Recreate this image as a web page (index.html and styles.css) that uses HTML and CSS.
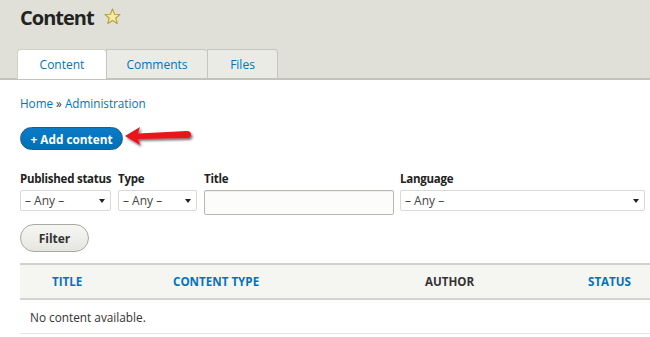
FILE: index.html
```html
<!DOCTYPE html>
<html>
<head>
<meta charset="utf-8">
<link rel="stylesheet" href="styles.css">
</head>
<body>
<header class="header">
  <h1 class="page-title"><span class="title-text">Content</span>
    <svg class="star" width="17" height="17" viewBox="0 0 17 17"><polygon points="8.5,1 10.6,6.2 16,6.5 11.8,10 13.2,15.5 8.5,12.5 3.8,15.5 5.2,10 1,6.5 6.4,6.2" fill="#f6e9a0" stroke="#b8a23a" stroke-width="1.1" stroke-linejoin="round"/></svg>
  </h1>
  <nav class="tabs">
    <a class="tab active">Content</a>
    <a class="tab">Comments</a>
    <a class="tab last">Files</a>
  </nav>
</header>
<main class="page">
  <div class="breadcrumb"><a>Home</a> » <a>Administration</a></div>
  <div class="actions">
    <a class="btn-primary">+ Add content</a>
    <svg class="arrow" width="72" height="26" viewBox="0 0 72 26">
      <defs><filter id="sh" x="-20%" y="-40%" width="150%" height="200%"><feDropShadow dx="1.5" dy="2" stdDeviation="1.2" flood-color="#000" flood-opacity="0.55"/></filter></defs>
      <path d="M2 11 L17 2 L15 8.5 L64 6 Q68 6 68 9.5 Q68 13 64 13 L15 14 L17 20 Z" fill="#e8141a" filter="url(#sh)"/>
    </svg>
  </div>
  <form class="filters">
    <div class="field f1">
      <label>Published status</label>
      <div class="select">– Any –<span class="caret"></span></div>
    </div>
    <div class="field f2">
      <label>Type</label>
      <div class="select">– Any –<span class="caret"></span></div>
    </div>
    <div class="field f3">
      <label>Title</label>
      <div class="text-input"></div>
    </div>
    <div class="field grow">
      <label>Language</label>
      <div class="select">– Any –<span class="caret"></span></div>
    </div>
  </form>
  <a class="btn">Filter</a>
  <div class="table">
    <div class="thead">
      <div class="th link">TITLE</div>
      <div class="th link">CONTENT TYPE</div>
      <div class="th">AUTHOR</div>
      <div class="th link">STATUS</div>
    </div>
    <div class="row">No content available.</div>
  </div>
</main>
</body>
</html>
```
FILE: styles.css
```css
* { box-sizing: border-box; }
html, body { margin: 0; padding: 0; }
body {
  font-family: "Open Sans", "DejaVu Sans", sans-serif;
  font-size: 12px;
  color: #333;
  background: #fff;
  overflow: hidden;
  width: 650px;
}
a { color: #0074bd; text-decoration: none; }

.header {
  background: #e0e0d8;
  border-bottom: 2px solid #c3c3bc;
  padding: 0 0 0 17px;
  height: 80px;
  display: flex;
  flex-direction: column;
}
.page-title {
  margin: 3px 0 0 3px;
  font-size: 20px;
  font-weight: 700;
  color: #232323;
  letter-spacing: -1px;
  display: flex;
  align-items: center;
  gap: 10px;
  height: 30px;
}
.star { margin-top: -2px; }
.tabs {
  display: flex;
  margin-top: 17px;
  height: 29px;
}
.tab {
  display: flex;
  align-items: center;
  justify-content: center;
  height: 29px;
  background: #ebebe5;
  border: 1px solid #c6c6bf;
  border-bottom: none;
  border-right: none;
  border-radius: 4px 4px 0 0;
  font-size: 12px;
  color: #0074bd;
  margin-bottom: -1px;
}
.tab:nth-child(1) { width: 89px; }
.tab:nth-child(2) { width: 101px; border-radius: 0 4px 0 0; }
.tab:nth-child(3) { width: 71px; border-right: 1px solid #c6c6bf; border-radius: 0 4px 0 0; }
.tab.active {
  background: #fff;
  height: 30px;
  border-color: #d0d0ca;
  position: relative;
  z-index: 1;
}

.page { padding: 0 0 0 20px; }
.breadcrumb {
  margin-top: 15px;
  height: 16px;
  line-height: 16px;
  font-size: 11.7px;
  color: #333;
}
.actions {
  position: relative;
  margin-top: 16px;
  height: 24px;
}
.btn-primary {
  display: inline-flex;
  align-items: center;
  justify-content: center;
  width: 103px;
  height: 23px;
  border-radius: 12px;
  background: linear-gradient(#0a7bc6, #0070b6);
  border: 1px solid #1e5c90;
  color: #fff;
  font-weight: 700;
  font-size: 11.8px;
}
.arrow {
  position: absolute;
  left: 103px;
  top: -2px;
}

.filters {
  display: flex;
  margin-top: 19px;
  gap: 7px;
  padding-right: 5px;
}
.field { display: flex; flex-direction: column; }
.field.f1 { width: 91px; }
.field.f2 { width: 79px; }
.field.f3 { width: 190px; margin-right: -1px; }
.field.grow { flex: 1; }
.field label {
  font-weight: 700;
  font-size: 11.5px;
  letter-spacing: -0.25px;
  color: #222;
  height: 17px;
  line-height: 17px;
  margin-bottom: 3px;
  white-space: nowrap;
}
.select {
  position: relative;
  height: 21px;
  border: 1px solid #d9d9d6;
  border-radius: 2px;
  background: #fff;
  padding-left: 4px;
  line-height: 19px;
  font-size: 12px;
  color: #444;
}
.caret {
  position: absolute;
  right: 5px;
  top: 8px;
  width: 0; height: 0;
  border-left: 3.5px solid transparent;
  border-right: 3.5px solid transparent;
  border-top: 4px solid #222;
}
.text-input {
  width: 190px;
  height: 25px;
  border: 1px solid #b8b8b4;
  border-radius: 2px;
  background: #fcfcfa;
  box-shadow: inset 0 1px 1px rgba(0,0,0,0.06);
}

.btn {
  display: flex;
  align-items: center;
  justify-content: center;
  margin-top: 9px;
  width: 69px;
  height: 28px;
  border-radius: 14px;
  border: 1px solid #a8a8a4;
  background: linear-gradient(#f6f6f3, #e6e6e1);
  color: #333;
  font-weight: 700;
  font-size: 12px;
}

.table { margin-top: 11px; }
.thead {
  display: grid;
  grid-template-columns: 121px 252px 163px 1fr;
  height: 37px;
  background: #f5f5f2;
  border-top: 2px solid #d2d2cd;
  border-bottom: 2px solid #d4d4cf;
  align-items: center;
}
.th {
  padding-left: 32px;
  font-weight: 700;
  font-size: 11.6px;
  color: #333;
}
.th.link { color: #0074bd; }
.row {
  height: 34px;
  line-height: 34px;
  padding-left: 10px;
  border-bottom: 1px solid #e4e4e0;
  font-size: 11.8px;
  color: #333;
}
```
